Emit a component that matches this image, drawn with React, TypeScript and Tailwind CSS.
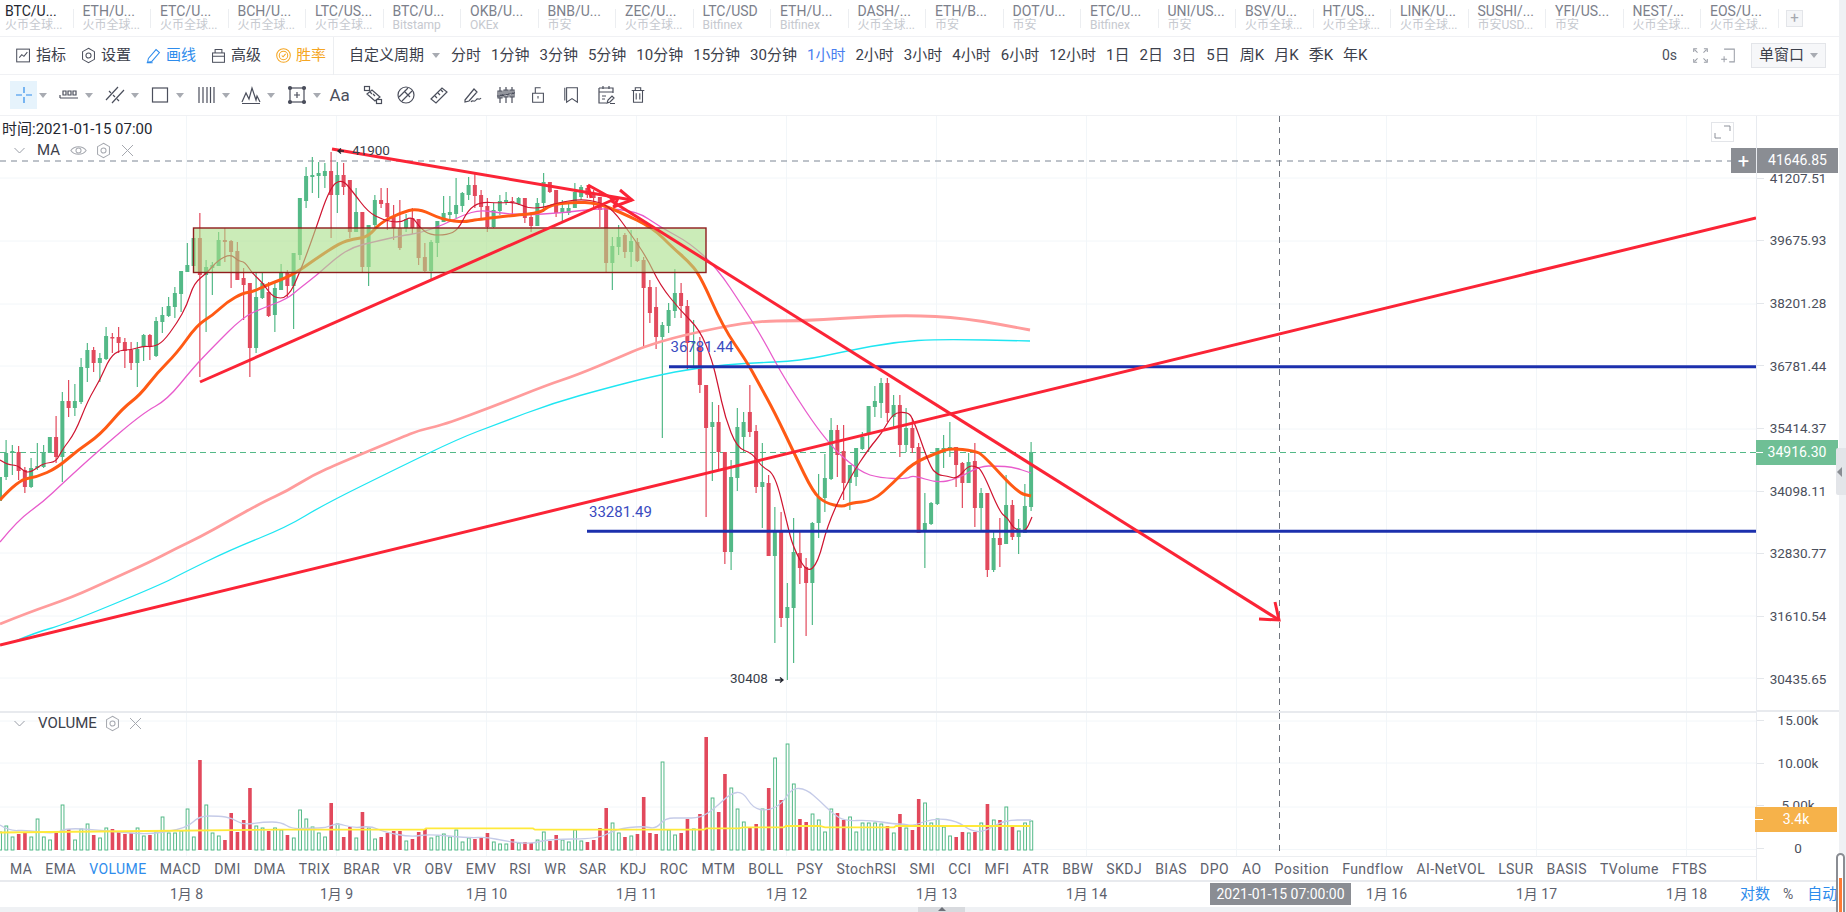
import React from "react";

const tabs = [
  ["BTC/U...", "火币全球..."], ["ETH/U...", "火币全球..."], ["ETC/U...", "火币全球..."], ["BCH/U...", "火币全球..."],
  ["LTC/US...", "火币全球..."], ["BTC/U...", "Bitstamp"], ["OKB/U...", "OKEx"], ["BNB/U...", "币安"],
  ["ZEC/U...", "火币全球..."], ["LTC/USD", "Bitfinex"], ["ETH/U...", "Bitfinex"], ["DASH/...", "火币全球..."],
  ["ETH/B...", "币安"], ["DOT/U...", "币安"], ["ETC/U...", "Bitfinex"], ["UNI/US...", "币安"],
  ["BSV/U...", "火币全球..."], ["HT/US...", "火币全球..."], ["LINK/U...", "火币全球..."], ["SUSHI/...", "币安USD..."],
  ["YFI/US...", "币安"], ["NEST/...", "火币全球..."], ["EOS/U...", "火币全球..."],
];

const periods = ["分时", "1分钟", "3分钟", "5分钟", "10分钟", "15分钟", "30分钟", "1小时", "2小时", "3小时", "4小时", "6小时", "12小时", "1日", "2日", "3日", "5日", "周K", "月K", "季K", "年K"];

const indicators = ["MA", "EMA", "VOLUME", "MACD", "DMI", "DMA", "TRIX", "BRAR", "VR", "OBV", "EMV", "RSI", "WR", "SAR", "KDJ", "ROC", "MTM", "BOLL", "PSY", "StochRSI", "SMI", "CCI", "MFI", "ATR", "BBW", "SKDJ", "BIAS", "DPO", "AO", "Position", "Fundflow", "AI-NetVOL", "LSUR", "BASIS", "TVolume", "FTBS"];

const prices = ["41207.51", "39675.93", "38201.28", "36781.44", "35414.37", "34098.11", "32830.77", "31610.54", "30435.65"];
const dates = ["1月 8", "1月 9", "1月 10", "1月 11", "1月 12", "1月 13", "1月 14", "1月 15", "1月 16", "1月 17", "1月 18"];

// candles: color (0 green, 1 red), body top, body bottom, wick top, wick bottom, page px
const candles: number[][] = [
  [0,453,477,440,480],[0,451,453,445,475],[1,452,471,446,480],[1,470,487,467,493],[0,468,487,458,488],[0,466,468,443,470],[0,452,467,445,468],[0,437,453,437,453],[1,437,457,416,463],[0,401,457,392,482],
  [1,401,408,380,417],[0,401,408,384,416],[0,367,402,358,404],[0,350,368,343,382],[1,350,363,347,372],[0,358,363,353,382],[0,336,359,327,360],[1,337,338,333,353],[1,337,343,327,353],[1,342,351,338,368],
  [1,350,363,342,370],[0,349,363,342,387],[0,335,347,334,361],[1,335,347,334,360],[0,321,356,317,357],[0,315,322,307,333],[0,306,316,297,317],[0,293,307,287,318],[0,271,294,271,312],[0,265,272,243,272],
  [0,238,266,238,266],[1,238,275,213,377],[0,267,275,260,332],[0,265,268,262,295],[0,240,266,232,266],[1,240,242,228,262],[1,241,252,240,288],[1,251,280,242,280],[1,278,285,268,320],[1,283,348,283,377],
  [0,297,348,273,353],[0,283,298,272,299],[1,292,316,282,317],[0,288,315,283,332],[0,273,290,264,290],[1,272,286,270,298],[0,253,286,253,329],[0,198,255,198,260],[0,176,201,167,208],[0,175,177,157,193],
  [0,173,176,162,198],[0,171,176,163,188],[1,171,195,152,238],[0,175,195,162,213],[1,175,187,163,195],[1,180,232,180,238],[0,212,232,188,232],[1,212,267,212,273],[0,225,267,225,286],[0,200,225,195,227],
  [1,200,204,188,208],[1,203,217,188,230],[1,217,228,205,240],[1,228,248,200,250],[0,219,228,214,232],[1,218,228,208,234],[1,219,258,219,265],[1,257,271,243,273],[0,242,271,240,280],[0,221,243,221,257],
  [0,213,222,196,222],[0,212,215,196,222],[0,205,214,178,218],[0,193,206,192,212],[0,185,195,177,200],[1,185,196,173,208],[1,195,207,190,218],[1,206,227,198,232],[0,210,227,203,228],[0,201,211,195,215],
  [0,200,202,192,205],[1,201,202,197,217],[0,198,204,197,205],[1,198,218,198,223],[1,217,226,212,232],[0,203,226,198,226],[0,182,203,173,212],[1,182,192,182,193],[1,190,213,190,217],[0,208,213,200,222],
  [0,208,213,203,215],[0,192,208,183,208],[0,187,197,185,200],[1,188,195,185,198],[1,193,198,190,207],[1,197,210,197,227],[1,208,263,208,273],[0,246,263,237,290],[0,237,247,225,255],[1,235,252,233,258],
  [0,241,252,230,267],[1,242,261,238,262],[1,260,288,257,347],[1,287,313,280,323],[1,307,337,287,349],[0,325,337,322,438],[0,310,326,303,333],[0,293,311,269,318],[1,293,306,283,318],[1,306,343,300,370],
  [0,342,343,320,367],[1,347,385,337,393],[1,385,428,385,517],[0,422,427,402,481],[1,422,452,405,469],[1,452,552,452,564],[0,477,552,460,570],[0,427,478,408,491],[0,422,437,412,452],[1,412,432,385,437],
  [1,431,487,425,493],[0,482,487,443,528],[1,483,556,475,556],[0,532,556,507,643],[1,532,618,512,627],[0,607,618,583,680],[0,552,608,518,663],[1,553,568,530,584],[1,567,583,558,636],[0,523,583,522,625],
  [0,497,523,474,538],[0,478,498,454,512],[0,430,479,418,480],[1,430,455,425,477],[1,451,483,425,500],[0,465,483,465,510],[0,448,477,448,486],[0,437,449,432,450],[0,406,433,406,452],[0,401,407,386,417],
  [0,383,403,378,418],[1,383,413,378,422],[0,405,417,395,427],[1,405,445,395,457],[0,428,445,408,452],[1,428,448,418,453],[1,447,533,443,533],[0,523,530,493,568],[0,503,524,502,525],[0,448,504,448,505],
  [0,448,452,435,468],[0,447,449,422,457],[1,447,465,447,487],[1,463,483,462,508],[0,462,483,453,483],[1,461,508,443,527],[0,493,508,488,530],[1,493,570,493,577],[0,538,570,530,572],[1,538,545,518,567],
  [0,505,544,475,544],[1,505,537,500,540],[0,528,537,519,554],[0,506,533,484,533],[0,452,507,442,511],
];

// volume heights, index from x=-0.15, negative is a red bar
const volumes = [18,24,13,-16,-18,13,31,13,10,-17,45,-21,10,21,26,-15,12,22,-21,-18,-16,-17,22,14,-15,18,33,17,17,19,41,13,-90,45,17,14,-10,-37,-18,-30,-62,24,22,-19,22,20,-15,12,40,31,23,17,13,-47,26,-13,-23,12,-38,22,11,-13,-17,-19,-19,9,-11,-18,-21,12,14,16,13,20,8,12,-11,-13,-17,8,6,6,-11,7,-8,-7,10,18,-9,-15,10,8,20,9,-8,-10,-22,-42,27,17,-13,14,-16,-53,-17,-16,88,20,15,-17,-31,21,-36,-113,52,-38,-76,62,41,28,-23,-26,41,-62,92,-50,106,66,-31,-28,36,30,18,41,-37,-30,33,18,27,27,27,26,-24,17,-36,22,-20,-51,47,27,31,23,14,-13,-18,17,-18,27,-46,30,-30,43,-24,19,27,29];

const maRed = "0,460 8,465 17,465 25,472 31,472 38,467 45,463 56,462 62,450 75,433 88,400 100,380 110,357 120,350 131,350 143,346 153,347 163,342 177,323 187,305 194,283 207,273 218,260 231,254 238,261 245,262 252,273 263,283 273,298 288,298 300,272 313,237 330,187 342,179 353,192 368,212 383,220 400,223 412,216 420,228 430,235 447,235 458,230 468,210 480,202 500,203 515,202 527,208 542,208 557,203 580,199 600,202 613,210 630,233 647,258 660,285 680,310 700,330 712,360 718,385 725,417 737,448 752,453 762,467 775,474 787,523 793,547 807,573 818,563 828,523 850,477 870,447 882,433 893,413 907,412 913,418 930,467 938,475 947,476 957,479 968,466 975,466 982,470 1000,513 1008,518 1013,528 1025,533 1032,517";
const maOrange = "0,500 18,480 37,477 57,468 78,450 100,435 123,408 140,395 157,373 177,353 197,325 213,315 227,302 243,293 252,292 267,285 293,275 317,258 340,243 353,239 368,237 380,223 400,213 418,208 443,220 465,222 473,220 517,215 540,213 550,205 573,202 597,203 620,212 653,228 673,248 687,260 700,275 723,327 747,362 758,382 775,413 795,455 813,492 825,503 843,507 850,503 873,501 893,483 913,463 937,453 950,448 975,451 983,455 1018,493 1031,496";
const maMagenta = "0,542 18,520 43,502 63,483 97,452 143,413 167,400 193,368 213,347 243,317 263,308 287,299 300,288 317,275 337,257 353,247 373,242 400,236 420,233 443,225 463,215 480,210 500,213 523,215 563,213 600,208 637,211 660,227 690,243 717,268 743,307 762,337 785,380 827,443 860,472 880,478 907,479 913,475 937,483 957,479 980,466 997,466 1013,467 1031,473";
const maPink = "0,624 27,613 73,597 110,580 150,562 177,548 200,537 227,522 263,502 287,491 313,475 340,463 400,438 420,430 443,425 497,405 547,385 577,375 620,357 643,347 683,335 753,321 800,321 847,318 906,315 965,318 1030,330";
const maCyan = "13,642 37,632 63,625 160,585 183,573 230,550 287,527 323,505 400,467 458,439 497,424 553,403 607,388 650,377 700,367 750,363 800,361 847,351 894,342 941,339 1030,341";
const volLavender = "0,824 9,830 27,829 54,833 67,827 98,829 129,832 152,833 187,827 199,815 219,815 232,817 243,824 263,821 281,821 292,828 310,827 326,827 337,822 353,827 371,825 384,831 411,836 429,833 469,837 487,836 504,840 531,843 549,838 598,838 616,828 643,825 656,828 665,817 683,817 700,817 714,808 731,792 743,791 753,807 767,810 782,803 792,787 806,788 820,800 833,813 845,820 869,819 894,823 904,823 912,825 935,817 957,820 971,830 984,831 1004,819 1031,819";
const volYellow = "0,831.5 147,830 277,828.7 424,828.7 426,827.4 533,827.4 535,828.7 704,828.7 706,827.4 739,827.4 743,826.3 784,826.3 786,825 820,825 825,826.3 894,826.3 896,825 1030,825";

const gridX = [186.5, 336.5, 486.5, 636.5, 786.5, 936.5, 1086.5, 1236.5, 1386.5, 1536.5, 1686.5];
const gridY = [178, 241, 304, 366, 429, 491, 553, 616, 678];
const volGridY = [720, 762, 806, 848.5];

const stroke = "#4b4f5c";

// round the corners of a point list through the segment midpoints
function smooth(points: string) {
  const p = points.split(" ").map((s) => s.split(",").map(Number));
  let d = `M${p[0][0]} ${p[0][1]}`;
  for (let i = 1; i < p.length - 1; i++) {
    const mx = (p[i][0] + p[i + 1][0]) / 2;
    const my = (p[i][1] + p[i + 1][1]) / 2;
    d += `Q${p[i][0]} ${p[i][1]} ${mx} ${my}`;
  }
  const last = p[p.length - 1];
  return `${d}L${last[0]} ${last[1]}`;
}

function Ico({ children, s = 20, c = stroke }: { children: React.ReactNode; s?: number; c?: string }) {
  return <svg width={s} height={s} viewBox="0 0 20 20" fill="none" stroke={c} strokeWidth="1.2" className="shrink-0">{children}</svg>;
}

function Caret() {
  return <span className="w-0 h-0 border-x-[4px] border-x-transparent border-t-[5px] border-t-[#a8abb2] shrink-0" />;
}

function Hexagon({ c = stroke, s = 18 }: { c?: string; s?: number }) {
  return <Ico s={s} c={c}><path d="M10 1.5l7 4v9l-7 4-7-4v-9z" /><circle cx="10" cy="10" r="3" /></Ico>;
}

function Tool({ children }: { children: React.ReactNode }) {
  return <div className="w-[45.5px] flex items-center gap-[6px] shrink-0">{children}<Caret /></div>;
}

function Cell({ children }: { children: React.ReactNode }) {
  return <div className="w-[33.3px] flex items-center shrink-0">{children}</div>;
}

function TabBar() {
  return (
    <div className="h-[37px] shrink-0 flex items-center border-b border-[#f0f1f4] -ml-[3.6px]">
      {tabs.map((t, i) => (
        <div key={i} className="w-[77.5px] h-[19px] shrink-0 border-r border-[#eceef1] pl-[8.6px] flex flex-col justify-center whitespace-nowrap">
          <div className={`text-[14px] leading-[14px] ${i === 0 ? "text-[#23262f]" : "text-[#7c808b]"}`}>{t[0]}</div>
          <div className="text-[12px] leading-[14px] text-[#c6c9cf]">{t[1]}</div>
        </div>
      ))}
      <div className="ml-[7px] w-[17px] h-[17px] border border-[#e3e5e9] bg-[#f5f6f8] text-[#a5a8af] flex items-center justify-center text-[15px] leading-none">+</div>
    </div>
  );
}

function MenuBar() {
  return (
    <div className="h-[38px] shrink-0 flex items-center border-b border-[#f0f1f4] pl-[15px] text-[15px] text-[#3c404b] whitespace-nowrap">
      <div className="flex items-center gap-[14px] w-[318px] shrink-0">
        <div className="flex items-center gap-[4px]">
          <Ico s={17}><rect x="2" y="2.5" width="15" height="15" /><path d="M5 12.5l3-3.5 2.5 2 4-5" /></Ico>指标
        </div>
        <div className="flex items-center gap-[4px]"><Hexagon s={17} />设置</div>
        <div className="flex items-center gap-[4px] text-[#2e8cec]">
          <Ico s={17} c="#2e8cec"><path d="M3 18l1-4.5L13 3l4 3.5-9 10.500zM2 18.500h7" /></Ico>画线
        </div>
        <div className="flex items-center gap-[4px]">
          <Ico s={17}><rect x="3" y="7" width="14" height="11" /><path d="M3 11h14M6 7V3h8v4" /></Ico>高级
        </div>
        <div className="flex items-center gap-[4px] text-[#f5a623]">
          <Ico s={17} c="#f5a623"><circle cx="10" cy="10" r="8" /><circle cx="10" cy="10" r="5" /><path d="M8 10l1.500 1.500L12.500 8" /></Ico>胜率
        </div>
      </div>
      <div className="w-px h-[38px] bg-[#eceef1] shrink-0" />
      <div className="ml-[15px] flex items-center gap-[8px] shrink-0">自定义周期<Caret /></div>
      <div className="ml-[11px] flex items-center gap-[10px]">
        {periods.map((p) => (
          <span key={p} className={p === "1小时" ? "text-[#4a7ff0]" : ""}>{p}</span>
        ))}
      </div>
      <div className="ml-auto flex items-center pr-[13px]">
        <span className="text-[14px] text-[#4b4f5c]">0s</span>
        <span className="ml-[15px]">
          <Ico s={17} c="#9a9ea7"><path d="M2 6V2h4M14 2h4v4M2 14v4h4M18 14v4h-4M3 3l3.500 3.500M17 3l-3.500 3.500M3 17l3.500-3.500M17 17l-3.500-3.500" /></Ico>
        </span>
        <span className="ml-[10px]">
          <Ico s={17} c="#9a9ea7"><path d="M6 2.500h12v15h-6M2.500 14.500h7M6 11v7" /></Ico>
        </span>
        <div className="ml-[15px] w-[75px] h-[25px] bg-[#f6f7f9] border border-[#e3e5e9] flex items-center justify-center gap-[6px] text-[#3c404b]">单窗口<Caret /></div>
      </div>
    </div>
  );
}

function DrawBar() {
  return (
    <div className="h-[41px] shrink-0 flex items-center border-b border-[#f0f1f4] pl-[10px]">
      <div className="w-[49px] flex items-center gap-[2px] shrink-0">
        <div className="w-[27px] h-[28px] bg-[#e6f3fc] flex items-center justify-center">
          <Ico c="#2e8cec"><path d="M10 2v6M10 12v6M2 10h6M12 10h6" /></Ico>
        </div>
        <Caret />
      </div>
      <Tool><Ico><path d="M1 13h18M1 13v-3M4 6h3v4H4zM9 6h3v4H9zM14 6h3v4h-3z" /></Ico></Tool>
      <Tool><Ico><path d="M1 15L13 2M7 18L19 5M4 6l2 2M8 10l2 2M12 14l2 2" /></Ico></Tool>
      <Tool><Ico><rect x="2.500" y="3" width="15" height="14" /></Ico></Tool>
      <Tool><Ico><path d="M3 2v16M7 2v16M11 2v16M14.500 2v16M18 2v16" /></Ico></Tool>
      <Tool><Ico><path d="M1 17l4-9 3 6 3-11 4 12 1-4 3 6M1 18.500h18" /></Ico></Tool>
      <div className="w-[43px] flex items-center gap-[6px] shrink-0">
        <Ico><rect x="3" y="3" width="14" height="14" /><path d="M10 7v6M7 10h6" /><circle cx="3" cy="3" r="1.500" fill={stroke} /><circle cx="17" cy="3" r="1.500" fill={stroke} /><circle cx="3" cy="17" r="1.500" fill={stroke} /><circle cx="17" cy="17" r="1.500" fill={stroke} /></Ico>
        <Caret />
      </div>
      <Cell><span className="text-[17px] leading-none text-[#4b4f5c]">Aa</span></Cell>
      <Cell><Ico><rect x="1.500" y="1.500" width="5" height="4" /><rect x="13.500" y="14.500" width="5" height="4" /><path d="M4 9l5-4 8 7-5 4zM7 7l2 2M10 9l2 2" /></Ico></Cell>
      <Cell><Ico><circle cx="10" cy="10" r="8" /><path d="M3 12L12 3M6 16l10-10M8 6l6 6" /></Ico></Cell>
      <Cell><Ico><path d="M2 14L13 3l5 4L7 18zM6 11l2 2M9 8l2 2M12 5l2 2" /></Ico></Cell>
      <Cell><Ico><path d="M2 15L11 4l3 3-8 9-4 1zM8 17c2-3 3 1 5-2s3 1 5-2" /></Ico></Cell>
      <Cell><Ico><path d="M4 2v16M10 2v16M16 2v16M2 6h4v7H2zM8 5h4v7H8zM14 5h4v7h-4zM1 11l18-3" /></Ico></Cell>
      <Cell><Ico s={18}><path d="M4 8h12v10H4zM7 8V2h6M10 11v3" /></Ico></Cell>
      <Cell><Ico s={18}><path d="M4 2h12v16l-6-4-6 4z" /><path d="M2 2v14" /></Ico></Cell>
      <Cell><Ico><path d="M3 3h14v5M3 3v15h7M3 7h14M7 1v3M13 1v3M6 11h4M6 14h3M11 18l1-3 4-4 2 2-4 4zM14 18.500h5" /></Ico></Cell>
      <Cell><Ico s={18}><path d="M3 5h14M7 5V2h6v3M5 5v13h10V5M8 8v7M12 8v7" /></Ico></Cell>
    </div>
  );
}

function MainChart() {
  return (
    <svg viewBox="0 116 1756 595" className="w-[1756px] h-[595px] block">
      {gridX.map((x) => <line key={x} x1={x} x2={x} y1="116" y2="711" stroke="#f2f6f9" />)}
      {gridY.map((y) => <line key={y} x1="0" x2="1756" y1={y} y2={y} stroke="#f2f6f9" />)}
      <line x1="0" x2="1756" y1="161" y2="161" stroke="#7d8694" strokeDasharray="6 5" />
      <line x1="0" x2="1756" y1="452.500" y2="452.500" stroke="#53b987" strokeDasharray="6 4" />
      <line x1="1279.500" x2="1279.500" y1="116" y2="711" stroke="#70757e" strokeDasharray="6 5" />
      {/* cut-off candle on the left edge */}
      <rect x="-2" y="477" width="4" height="24" fill="#53b987" />
      {candles.map((c, i) => {
        const x = 6.1 + 6.25 * i;
        const col = c[0] ? "#e2495c" : "#53b987";
        return (
          <g key={i}>
            <line x1={x} x2={x} y1={c[3]} y2={c[4]} stroke={col} strokeWidth="1.200" />
            <rect x={x - 2} y={c[1]} width="4" height={Math.max(c[2] - c[1], 1.500)} fill={col} />
          </g>
        );
      })}
      <path d={smooth(maPink)} fill="none" stroke="#ff9c9c" strokeWidth="2.800" />
      <path d={smooth(maCyan)} fill="none" stroke="#1fe6f2" strokeWidth="1.300" />
      <path d={smooth(maMagenta)} fill="none" stroke="#e85ccc" strokeWidth="1.300" />
      <path d={smooth(maOrange)} fill="none" stroke="#ff5a14" strokeWidth="3" />
      <path d={smooth(maRed)} fill="none" stroke="#cf1430" strokeWidth="1.200" />
      <rect x="193.500" y="228" width="512.500" height="44.500" fill="#a9e088" fillOpacity="0.6" stroke="#8f1d1d" strokeWidth="1.400" />
      <line x1="669" x2="1756" y1="366.700" y2="366.700" stroke="#1c30ad" strokeWidth="3" />
      <line x1="587" x2="1756" y1="531.300" y2="531.300" stroke="#1c30ad" strokeWidth="3" />
      <g stroke="#fb2436" strokeWidth="3" fill="none">
        <line x1="332" y1="149" x2="632" y2="200" />
        <path d="M620 190l12 10-19 7" />
        <line x1="200" y1="382" x2="617" y2="198" />
        <path d="M588 185l27 15M588 185l3 13M618 198l-4 9" />
        <line x1="0" y1="645" x2="1756" y2="218" />
        <line x1="610" y1="200" x2="1279" y2="620" />
        <path d="M1259 619l20 1-4-18" />
      </g>
      <g className="text-[13.500px]" fill="#3a3e4a">
        <text x="352" y="155">41900</text>
        <text x="730" y="683">30408</text>
      </g>
      <path d="M344 151h-6m3-2.500l-3 2.500 3 2.500M775 680h8m-3-2.500l3 2.500-3 2.500" stroke="#23262f" strokeWidth="1.300" fill="none" />
      <text x="670.500" y="352" fill="#3a4bc0" className="text-[15px]">36781.44</text>
      <text x="589" y="517" fill="#3a4bc0" className="text-[15px]">33281.49</text>
    </svg>
  );
}

function VolumeChart() {
  return (
    <svg viewBox="0 712 1756 143" className="w-[1756px] h-[143px] block">
      {gridX.map((x) => <line key={x} x1={x} x2={x} y1="712" y2="855" stroke="#f2f6f9" />)}
      {volGridY.map((y) => <line key={y} x1="0" x2="1756" y1={y} y2={y} stroke="#f2f6f9" />)}
      <line x1="1279.500" x2="1279.500" y1="712" y2="855" stroke="#70757e" strokeDasharray="6 5" />
      {volumes.map((v, i) => {
        const x = 6.1 + 6.25 * (i - 1) + 0.1;
        const h = Math.abs(v);
        return v < 0
          ? <rect key={i} x={x - 1.800} y={849 - h} width="3.600" height={h} fill="#e2495c" />
          : <rect key={i} x={x - 1.300} y={849 - h} width="2.800" height={h} fill="#fff" stroke="#53b987" />;
      })}
      <path d={smooth(volLavender)} fill="none" stroke="#c5cbe8" strokeWidth="1.300" />
      <polyline points={volYellow} fill="none" stroke="#ffe93b" strokeWidth="1.800" />
    </svg>
  );
}

function PriceAxis() {
  return (
    <div className="w-[83px] shrink-0 border-l border-[#e8ebf0] flex flex-col text-[13.500px] text-[#4b4f5c]">
      <div className="h-[595px] shrink-0 pt-[30.700px]">
        {prices.map((p) => (
          <div key={p} className="relative h-[62.600px] flex items-center justify-center">
            <span className="absolute left-0 top-[31px] w-[7px] h-px bg-[#e3e6ea]" />
            {p}
          </div>
        ))}
      </div>
      <div className="border-t-2 border-[#e8eaee] flex flex-col gap-[26.700px] -mt-px">
        {["15.00k", "10.00k", "5.00k", "0"].map((p) => (
          <div key={p} className="relative h-[16px] flex items-center justify-center">
            <span className="absolute left-0 top-[8px] w-[7px] h-px bg-[#e3e6ea]" />
            {p}
          </div>
        ))}
      </div>
    </div>
  );
}

export default function App() {
  return (
    <div className="relative w-[1846px] h-[912px] overflow-hidden bg-[#eff1f4] font-[Roboto,'Noto_Sans_CJK_SC',sans-serif]">
      <div className="w-[1839px] h-[907px] bg-white flex flex-col overflow-hidden">
        <TabBar />
        <MenuBar />
        <DrawBar />
        <div className="relative flex h-[764px] shrink-0">
          <div className="w-[1756px] shrink-0 flex flex-col">
            <div className="relative h-[595px] shrink-0">
              <MainChart />
              <div className="absolute left-[2px] top-[4px] text-[15px] leading-[18px] text-[#23262f]">时间:2021-01-15 07:00</div>
              <div className="absolute left-[13px] top-[25px] flex items-center text-[#8d919a]">
                <svg width="13" height="13" viewBox="0 0 13 13" fill="none" stroke="#9a9ea7"><path d="M1.500 4l5 5 5-5" /></svg>
                <span className="ml-[11px] text-[15px] leading-[18px] text-[#3c404b]">MA</span>
                <span className="ml-[10px]"><Ico s={17} c="#a5a8af"><path d="M1 10c4-6 14-6 18 0-4 6-14 6-18 0z" /><circle cx="10" cy="10" r="3" /></Ico></span>
                <span className="ml-[8px]"><Hexagon c="#a5a8af" s={17} /></span>
                <svg className="ml-[9px]" width="13" height="13" viewBox="0 0 13 13" fill="none" stroke="#a5a8af"><path d="M1 1l11 11M12 1L1 12" /></svg>
              </div>
              <div className="absolute left-[1711px] top-[6px] w-[23px] h-[20px] border border-[#e3e5e9] bg-white">
                <svg width="21" height="18" viewBox="0 0 21 18" fill="none" stroke="#8d919a"><path d="M12 3h6v5M3 10v5h6" /></svg>
              </div>
            </div>
            <div className="h-[145px] shrink-0 border-t-2 border-[#e8eaee] relative">
              <VolumeChart />
              <div className="absolute left-[13px] top-[1px] flex items-center">
                <svg width="13" height="13" viewBox="0 0 13 13" fill="none" stroke="#9a9ea7"><path d="M1.500 4l5 5 5-5" /></svg>
                <span className="ml-[12px] text-[15px] leading-[18px] text-[#3c404b]">VOLUME</span>
                <span className="ml-[7px]"><Hexagon c="#a5a8af" s={17} /></span>
                <svg className="ml-[8px]" width="13" height="13" viewBox="0 0 13 13" fill="none" stroke="#a5a8af"><path d="M1 1l11 11M12 1L1 12" /></svg>
              </div>
            </div>
            <div className="h-[24px] shrink-0 border-t border-[#eceef1] flex items-center gap-[13px] pl-[10px] pt-[2px] text-[14px] tracking-[0.44px] text-[#5d616d] whitespace-nowrap overflow-hidden">
              {indicators.map((n) => (
                <span key={n} className={n === "VOLUME" ? "text-[#2e8cec]" : ""}>{n}</span>
              ))}
            </div>
          </div>
          <PriceAxis />
          {/* price and volume badges over the axis */}
          <div className="absolute left-[1731px] top-[32px] h-[25px] flex text-white text-[14px]">
            <div className="w-[25px] bg-[#8a8d93] flex items-center justify-center text-[20px] leading-none">+</div>
            <div className="ml-px w-[81px] bg-[#8a8d93] flex items-center justify-center">41646.85</div>
          </div>
          <div className="absolute left-[1756px] top-[324px] w-[82px] h-[25px] bg-[#6fbf95] text-white text-[14px] flex items-center justify-center">
            <span className="absolute left-0 top-[12px] w-[7px] h-px bg-white" />34916.30
          </div>
          <div className="absolute left-[1755px] top-[691px] w-[82px] h-[25px] bg-[#f6b24a] text-white text-[14px] flex items-center justify-center">
            <span className="absolute left-0 top-[12px] w-[8px] h-px bg-white" />3.4k
          </div>
        </div>
        <div className="relative h-[27px] shrink-0 border-t-2 border-[#e8eaee] flex items-center text-[14px] text-[#5d616d] whitespace-nowrap">
          <div className="w-[1738px] shrink-0 overflow-hidden flex pl-[111.500px]">
            {dates.map((d) => (
              <div key={d} className="w-[150px] shrink-0 text-center">{d}</div>
            ))}
          </div>
          <span className="ml-[2px] text-[15px] text-[#2e8cec]">对数</span>
          <span className="ml-[13px]">%</span>
          <span className="ml-[14px] text-[15px] text-[#2e8cec]">自动</span>
          <div className="absolute left-[1210px] top-[1px] w-[141px] h-[22px] bg-[#8a8d93] text-white flex items-center justify-center">2021-01-15 07:00:00</div>
        </div>
      </div>
      {/* collapse handles and the scroll thumb at the window edge */}
      <div className="absolute left-[1836px] top-[448px] w-[10px] h-[47px] rounded-l-[2px] bg-[#e3e5e9] flex items-center pl-[1px]">
        <span className="w-0 h-0 border-y-[5px] border-y-transparent border-r-[5px] border-r-[#8a8d93]" />
      </div>
      <div className="absolute left-[918px] top-[907px] w-[47px] h-[5px] bg-[#d8dade] flex justify-center">
        <span className="w-0 h-0 border-x-[4px] border-x-transparent border-b-[4px] border-b-[#6d7078]" />
      </div>
      <div className="absolute left-[1836px] top-[853px] w-[9px] h-[70px] rounded-[5px] border-2 border-[#8a8d93] bg-white pl-px pt-[23px]">
        <div className="w-[3px] h-[40px] bg-[#ff7a33]" />
      </div>
    </div>
  );
}
